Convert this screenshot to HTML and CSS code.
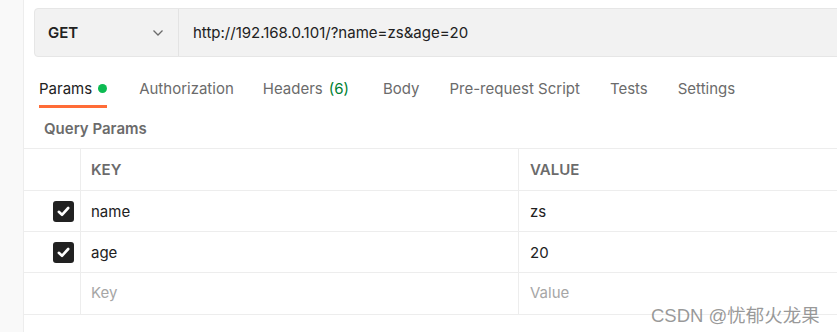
FILE: index.html
```html
<!DOCTYPE html>
<html lang="en">
<head>
    <meta charset="UTF-8">
    <title>Params</title>
    <link rel="stylesheet" href="styles.css">
</head>
<body>
    <div class="side"></div>
    <div class="main">
        <!-- request bar -->
        <div class="url-bar">
            <div class="method">
                <span>GET</span>
                <svg class="chevron" width="12" height="8" viewBox="0 0 12 8"><path d="M1.5 1.5 L6 6 L10.5 1.5" fill="none" stroke="#6b6b6b" stroke-width="1.3"/></svg>
            </div>
            <div class="url">http://192.168.0.101/?name=zs&amp;age=20</div>
        </div>

        <div class="tabs">
            <div class="tab active">Params <span class="dot"></span></div>
            <div class="tab auth">Authorization</div>
            <div class="tab headers">Headers <span class="count">(6)</span></div>
            <div class="tab">Body</div>
            <div class="tab">Pre-request Script</div>
            <div class="tab">Tests</div>
            <div class="tab">Settings</div>
        </div>

        <div class="section-title">Query Params</div>

        <div class="params">
            <div class="cell check"></div>
            <div class="cell head key">KEY</div>
            <div class="cell head">VALUE</div>

            <div class="cell check"><span class="box"><svg width="13" height="11" viewBox="0 0 13 11"><path d="M1.8 5.8 L5 8.8 L11.2 2" fill="none" stroke="#fff" stroke-width="2.6" stroke-linecap="round" stroke-linejoin="round"/></svg></span></div>
            <div class="cell key">name</div>
            <div class="cell">zs</div>

            <div class="cell check"><span class="box"><svg width="13" height="11" viewBox="0 0 13 11"><path d="M1.8 5.8 L5 8.8 L11.2 2" fill="none" stroke="#fff" stroke-width="2.6" stroke-linecap="round" stroke-linejoin="round"/></svg></span></div>
            <div class="cell key">age</div>
            <div class="cell">20</div>

            <div class="cell check"></div>
            <div class="cell key placeholder">Key</div>
            <div class="cell placeholder">Value</div>
        </div>
    </div>
    <div class="watermark">CSDN @忧郁火龙果</div>
</body>
</html>
```

FILE: styles.css
```css
body {
    margin: 0;
    font-family: Inter, "Noto Sans", sans-serif;
    font-size: 15px;
    color: #212121;
    background-color: #fff;
    display: flex;
    height: 332px;
    overflow: hidden;
}
.side {
    width: 23px;
    flex-shrink: 0;
    background-color: #f9f9f9;
    border-right: 1px solid #ededed;
}
.main {
    flex-grow: 1;
    min-width: 0;
}
.url-bar {
    display: flex;
    margin: 8px -20px 0 10px;
    height: 47px;
    background-color: #f2f2f2;
    border: 1px solid #e6e6e6;
    border-radius: 4px;
}
.method {
    box-sizing: border-box;
    width: 144px;
    padding: 0 14px 0 13px;
    display: flex;
    align-items: center;
    justify-content: space-between;
    font-weight: 600;
    font-size: 15px;
    border-right: 1px solid #e3e3e3;
}
.url {
    display: flex;
    align-items: center;
    padding-left: 14px;
}
.tabs {
    display: flex;
    margin: 13px 0 0 15px;
    height: 37px;
}
.tab {
    color: #6b6b6b;
    margin-right: 30px;
    padding-top: 9px;
    height: 26px;
    display: flex;
    align-items: flex-start;
    gap: 6px;
}
.tab.active {
    color: #212121;
    border-bottom: 3px solid #ff6c37;
    margin-right: 32px;
}
.tab.auth {
    margin-right: 29px;
}
.tab.headers {
    margin-right: 34px;
}
.dot {
    width: 9px;
    height: 9px;
    border-radius: 50%;
    background-color: #0cbb52;
    margin-top: 5px;
}
.count {
    color: #007f31;
}
.section-title {
    font-weight: 600;
    color: #6b6b6b;
    padding: 12px 0 0 20px;
    height: 29px;
}
.params {
    display: grid;
    grid-template-columns: 56px 438px 1fr;
    grid-template-rows: 42px 41px 41px 41px;
    border-top: 1px solid #ededed;
    border-bottom: 1px solid #ededed;
}
.cell {
    display: flex;
    align-items: center;
    padding-left: 11px;
    border-left: 1px solid #ededed;
    border-bottom: 1px solid #ededed;
}
.cell.key {
    padding-left: 10px;
}
.cell:nth-last-child(-n+3) {
    border-bottom: none;
}
.cell.check {
    border-left: none;
    justify-content: flex-end;
    padding: 0 6px 0 0;
}
.head {
    font-weight: 600;
    color: #6b6b6b;
}
.placeholder {
    color: #a6a6a6;
    padding-bottom: 3px;
}
.box {
    width: 21px;
    height: 21px;
    border-radius: 3px;
    background-color: #212121;
    display: flex;
    align-items: center;
    justify-content: center;
}
.watermark {
    position: absolute;
    left: 651px;
    top: 301px;
    font-family: "Liberation Sans", "Noto Sans CJK SC", sans-serif;
    font-size: 18.5px;
    color: rgba(120, 120, 120, 0.75);
}
```
